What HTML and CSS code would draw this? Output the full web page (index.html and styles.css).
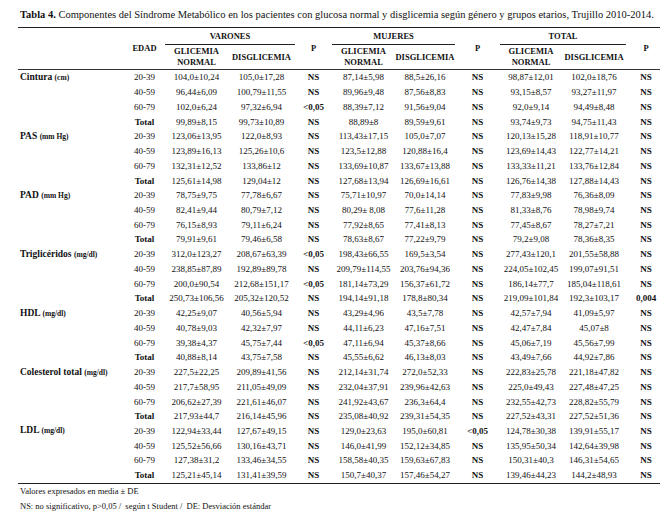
FILE: index.html
```html
<!DOCTYPE html>
<html lang="es">
<head>
<meta charset="utf-8">
<link rel="stylesheet" href="styles.css">
</head>
<body>
<div class="page">
<p class="title"><b>Tabla 4.</b> Componentes del Síndrome Metabólico en los pacientes con glucosa normal y disglicemia según género y grupos etarios, Trujillo 2010-2014.</p>
<table class="tbl">
<colgroup>
<col class="c-lab"><col class="c-age"><col class="c-gn"><col class="c-dis"><col class="c-p1"><col class="c-gn2"><col class="c-dis2"><col class="c-p2"><col class="c-gn3"><col class="c-dis3"><col class="c-p3">
</colgroup>
<thead>
<tr class="h1">
<th rowspan="2" class="top hb"></th>
<th rowspan="2" class="top hb">EDAD</th>
<th colspan="2" class="top grp">VARONES</th>
<th rowspan="2" class="top hb">P</th>
<th colspan="2" class="top grp">MUJERES</th>
<th rowspan="2" class="top hb">P</th>
<th colspan="2" class="top grp">TOTAL</th>
<th rowspan="2" class="top hb plast">P</th>
</tr>
<tr class="h2">
<th class="hb">GLICEMIA<br>NORMAL</th><th class="hb">DISGLICEMIA</th>
<th class="hb">GLICEMIA<br>NORMAL</th><th class="hb">DISGLICEMIA</th>
<th class="hb">GLICEMIA<br>NORMAL</th><th class="hb">DISGLICEMIA</th>
</tr>
</thead>
<tbody>
<tr><td class="lab">Cintura <small>(cm)</small></td><td class="age">20-39</td><td>104,0±10,24</td><td>105,0±17,28</td><td class="p">NS</td><td>87,14±5,98</td><td>88,5±26,16</td><td class="p">NS</td><td>98,87±12,01</td><td>102,0±18,76</td><td class="p plast">NS</td></tr>
<tr><td class="lab"></td><td class="age">40-59</td><td>96,44±6,09</td><td>100,79±11,55</td><td class="p">NS</td><td>89,96±9,48</td><td>87,56±8,83</td><td class="p">NS</td><td>93,15±8,57</td><td>93,27±11,97</td><td class="p plast">NS</td></tr>
<tr><td class="lab"></td><td class="age">60-79</td><td>102,0±6,24</td><td>97,32±6,94</td><td class="p">&lt;0,05</td><td>88,39±7,12</td><td>91,56±9,04</td><td class="p">NS</td><td>92,0±9,14</td><td>94,49±8,48</td><td class="p plast">NS</td></tr>
<tr><td class="lab"></td><td class="age tot">Total</td><td>99,89±8,15</td><td>99,73±10,89</td><td class="p">NS</td><td>88,89±8</td><td>89,59±9,61</td><td class="p">NS</td><td>93,74±9,73</td><td>94,75±11,43</td><td class="p plast">NS</td></tr>

<tr><td class="lab">PAS <small>(mm Hg)</small></td><td class="age">20-39</td><td>123,06±13,95</td><td>122,0±8,93</td><td class="p">NS</td><td>113,43±17,15</td><td>105,0±7,07</td><td class="p">NS</td><td>120,13±15,28</td><td>118,91±10,77</td><td class="p plast">NS</td></tr>
<tr><td class="lab"></td><td class="age">40-59</td><td>123,89±16,13</td><td>125,26±10,6</td><td class="p">NS</td><td>123,5±12,88</td><td>120,88±16,4</td><td class="p">NS</td><td>123,69±14,43</td><td>122,77±14,21</td><td class="p plast">NS</td></tr>
<tr><td class="lab"></td><td class="age">60-79</td><td>132,31±12,52</td><td>133,86±12</td><td class="p">NS</td><td>133,69±10,87</td><td>133,67±13,88</td><td class="p">NS</td><td>133,33±11,21</td><td>133,76±12,84</td><td class="p plast">NS</td></tr>
<tr><td class="lab"></td><td class="age tot">Total</td><td>125,61±14,98</td><td>129,04±12</td><td class="p">NS</td><td>127,68±13,94</td><td>126,69±16,61</td><td class="p">NS</td><td>126,76±14,38</td><td>127,88±14,43</td><td class="p plast">NS</td></tr>

<tr><td class="lab">PAD <small>(mm Hg)</small></td><td class="age">20-39</td><td>78,75±9,75</td><td>77,78±6,67</td><td class="p">NS</td><td>75,71±10,97</td><td>70,0±14,14</td><td class="p">NS</td><td>77,83±9,98</td><td>76,36±8,09</td><td class="p plast">NS</td></tr>
<tr><td class="lab"></td><td class="age">40-59</td><td>82,41±9,44</td><td>80,79±7,12</td><td class="p">NS</td><td>80,29± 8,08</td><td>77,6±11,28</td><td class="p">NS</td><td>81,33±8,76</td><td>78,98±9,74</td><td class="p plast">NS</td></tr>
<tr><td class="lab"></td><td class="age">60-79</td><td>76,15±8,93</td><td>79,11±6,24</td><td class="p">NS</td><td>77,92±8,65</td><td>77,41±8,13</td><td class="p">NS</td><td>77,45±8,67</td><td>78,27±7,21</td><td class="p plast">NS</td></tr>
<tr><td class="lab"></td><td class="age tot">Total</td><td>79,91±9,61</td><td>79,46±6,58</td><td class="p">NS</td><td>78,63±8,67</td><td>77,22±9,79</td><td class="p">NS</td><td>79,2±9,08</td><td>78,36±8,35</td><td class="p plast">NS</td></tr>

<tr><td class="lab">Triglicéridos <small>(mg/dl)</small></td><td class="age">20-39</td><td>312,0±123,27</td><td>208,67±63,39</td><td class="p">&lt;0,05</td><td>198,43±66,55</td><td>169,5±3,54</td><td class="p">NS</td><td>277,43±120,1</td><td>201,55±58,88</td><td class="p plast">NS</td></tr>
<tr><td class="lab"></td><td class="age">40-59</td><td>238,85±87,89</td><td>192,89±89,78</td><td class="p">NS</td><td>209,79±114,55</td><td>203,76±94,36</td><td class="p">NS</td><td>224,05±102,45</td><td>199,07±91,51</td><td class="p plast">NS</td></tr>
<tr><td class="lab"></td><td class="age">60-79</td><td>200,0±90,54</td><td>212,68±151,17</td><td class="p">&lt;0,05</td><td>181,14±73,29</td><td>156,37±61,72</td><td class="p">NS</td><td>186,14±77,7</td><td>185,04±118,61</td><td class="p plast">NS</td></tr>
<tr><td class="lab"></td><td class="age tot">Total</td><td>250,73±106,56</td><td>205,32±120,52</td><td class="p">NS</td><td>194,14±91,18</td><td>178,8±80,34</td><td class="p">NS</td><td>219,09±101,84</td><td>192,3±103,17</td><td class="p plast">0,004</td></tr>

<tr><td class="lab">HDL <small>(mg/dl)</small></td><td class="age">20-39</td><td>42,25±9,07</td><td>40,56±5,94</td><td class="p">NS</td><td>43,29±4,96</td><td>43,5±7,78</td><td class="p">NS</td><td>42,57±7,94</td><td>41,09±5,97</td><td class="p plast">NS</td></tr>
<tr><td class="lab"></td><td class="age">40-59</td><td>40,78±9,03</td><td>42,32±7,97</td><td class="p">NS</td><td>44,11±6,23</td><td>47,16±7,51</td><td class="p">NS</td><td>42,47±7,84</td><td>45,07±8</td><td class="p plast">NS</td></tr>
<tr><td class="lab"></td><td class="age">60-79</td><td>39,38±4,37</td><td>45,75±7,44</td><td class="p">&lt;0,05</td><td>47,11±6,94</td><td>45,37±8,66</td><td class="p">NS</td><td>45,06±7,19</td><td>45,56±7,99</td><td class="p plast">NS</td></tr>
<tr><td class="lab"></td><td class="age tot">Total</td><td>40,88±8,14</td><td>43,75±7,58</td><td class="p">NS</td><td>45,55±6,62</td><td>46,13±8,03</td><td class="p">NS</td><td>43,49±7,66</td><td>44,92±7,86</td><td class="p plast">NS</td></tr>

<tr><td class="lab">Colesterol total <small>(mg/dl)</small></td><td class="age">20-39</td><td>227,5±22,25</td><td>209,89±41,56</td><td class="p">NS</td><td>212,14±31,74</td><td>272,0±52,33</td><td class="p">NS</td><td>222,83±25,78</td><td>221,18±47,82</td><td class="p plast">NS</td></tr>
<tr><td class="lab"></td><td class="age">40-59</td><td>217,7±58,95</td><td>211,05±49,09</td><td class="p">NS</td><td>232,04±37,91</td><td>239,96±42,63</td><td class="p">NS</td><td>225,0±49,43</td><td>227,48±47,25</td><td class="p plast">NS</td></tr>
<tr><td class="lab"></td><td class="age">60-79</td><td>206,62±27,39</td><td>221,61±46,07</td><td class="p">NS</td><td>241,92±43,67</td><td>236,3±64,4</td><td class="p">NS</td><td>232,55±42,73</td><td>228,82±55,79</td><td class="p plast">NS</td></tr>
<tr><td class="lab"></td><td class="age tot">Total</td><td>217,93±44,7</td><td>216,14±45,96</td><td class="p">NS</td><td>235,08±40,92</td><td>239,31±54,35</td><td class="p">NS</td><td>227,52±43,31</td><td>227,52±51,36</td><td class="p plast">NS</td></tr>

<tr><td class="lab">LDL <small>(mg/dl)</small></td><td class="age">20-39</td><td>122,94±33,44</td><td>127,67±49,15</td><td class="p">NS</td><td>129,0±23,63</td><td>195,0±60,81</td><td class="p">&lt;0,05</td><td>124,78±30,38</td><td>139,91±55,17</td><td class="p plast">NS</td></tr>
<tr><td class="lab"></td><td class="age">40-59</td><td>125,52±56,66</td><td>130,16±43,71</td><td class="p">NS</td><td>146,0±41,99</td><td>152,12±34,85</td><td class="p">NS</td><td>135,95±50,34</td><td>142,64±39,98</td><td class="p plast">NS</td></tr>
<tr><td class="lab"></td><td class="age">60-79</td><td>127,38±31,2</td><td>133,46±34,55</td><td class="p">NS</td><td>158,58±40,35</td><td>159,63±67,83</td><td class="p">NS</td><td>150,31±40,3</td><td>146,31±54,65</td><td class="p plast">NS</td></tr>
<tr class="last"><td class="lab"></td><td class="age tot">Total</td><td>125,21±45,14</td><td>131,41±39,59</td><td class="p">NS</td><td>150,7±40,37</td><td>157,46±54,27</td><td class="p">NS</td><td>139,46±44,23</td><td>144,2±48,93</td><td class="p plast">NS</td></tr>
</tbody>
</table>
<p class="note">Valores expresados en media ± DE</p>
<p class="note">NS: no significativo, p&gt;0,05 /&nbsp; según t Student /&nbsp; DE: Desviación estándar</p>
</div>
</body>
</html>
```

FILE: styles.css
```css
html, body {
  margin: 0;
  padding: 0;
  background: #fff;
}

.page {
  padding: 8px 10px 0 18px;
  width: 642px;
  font-family: "Liberation Serif", "Times New Roman", serif;
  color: #111;
}

.title {
  margin: 0 0 5px 2px;
  font-size: 10.5px;
  line-height: 14px;
  white-space: nowrap;
}

.tbl {
  width: 642px;
  table-layout: fixed;
  border-collapse: separate;
  border-spacing: 0;
  font-size: 9px;
}

.c-lab { width: 106px; }
.c-age { width: 41px; }
.c-gn { width: 63px; }
.c-dis { width: 67px; }
.c-p1 { width: 37px; }
.c-gn2 { width: 63px; }
.c-dis2 { width: 60px; }
.c-p2 { width: 45px; }
.c-gn3 { width: 62px; }
.c-dis3 { width: 64px; }
.c-p3 { width: 34px; }

.tbl th {
  padding: 0;
  font-weight: bold;
  font-size: 8.5px;
  line-height: 11px;
  text-align: center;
  vertical-align: middle;
}

.tbl .top {
  border-top: 1px solid #222;
}

.tbl .grp {
  border-bottom: 1px solid #222;
}

.tbl .hb {
  border-bottom: 1px solid #333;
}

.tbl tr.h1 { height: 18px; }
.tbl tr.h2 { height: 25px; }

.tbl td {
  padding: 0;
  height: 14.74px;
  line-height: 10px;
  text-align: center;
  vertical-align: middle;
  white-space: nowrap;
}

.tbl td.lab {
  text-align: left;
  padding-left: 2px;
  font-weight: bold;
  font-size: 9.5px;
}

.tbl td.lab small {
  font-size: 7.5px;
}

.tbl td.tot {
  font-weight: bold;
}

.tbl td.p {
  font-weight: bold;
}

.tbl .plast {
  padding-left: 6px;
}

.tbl tr.last td {
  border-bottom: 1.5px solid #222;
}

.note {
  margin: 0;
  padding-left: 2px;
  font-size: 8.5px;
  line-height: 15.5px;
}
```
